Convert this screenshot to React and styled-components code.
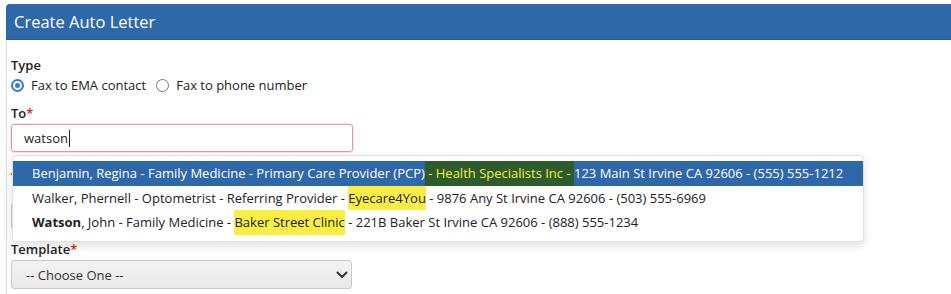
import React from "react";
import styled, { createGlobalStyle } from "styled-components";

const Global = createGlobalStyle`
  html, body { margin: 0; padding: 0; background: #fff; overflow: hidden; }
  body { font-family: "Open Sans", "Liberation Sans", sans-serif; color: #222; }
  * { box-sizing: border-box; }
`;

const Page = styled.div`
  position: relative;
  width: 951px;
  height: 294px;
  padding: 4px 0 0 6px;
`;

const Panel = styled.section`
  width: 960px;
  border: 1px solid #dcdcdc;
  border-radius: 4px 4px 0 0;
  height: 300px;
`;

const Header = styled.header`
  height: 36px;
  margin: -1px -1px 0 -1px;
  background: #2f68a8;
  border-radius: 4px 4px 0 0;
  color: #fff;
  font-size: 16.5px;
  display: flex;
  align-items: center;
  padding-left: 8px;
  border-bottom: 1px solid #285a93;
`;

const Body = styled.div`
  padding: 15px 4px 0 4px;
  display: flex;
  flex-direction: column;
  gap: 8px;
`;

const Group = styled.div`
  display: flex;
  flex-direction: column;
  gap: ${(p) => p.$gap ?? 1}px;
`;

const Label = styled.div`
  font-size: 13px;
  font-weight: 600;
  line-height: 20px;
  color: #222;
`;

const Req = styled.span`
  color: #d9261c;
`;

const RadioRow = styled.div`
  display: flex;
  align-items: center;
  height: 20px;
  gap: 10px;
`;

const RadioOpt = styled.label`
  display: flex;
  align-items: center;
  gap: 7px;
  font-size: 13px;
`;

const Radio = styled.span`
  width: 13px;
  height: 13px;
  border-radius: 50%;
  border: ${(p) => (p.$checked ? "2px solid #2f7ae5" : "1.5px solid #777")};
  display: flex;
  align-items: center;
  justify-content: center;
  &::after {
    content: "";
    width: 5px;
    height: 5px;
    border-radius: 50%;
    background: ${(p) => (p.$checked ? "#2f7ae5" : "transparent")};
  }
`;

const Input = styled.div`
  width: 342px;
  height: 28px;
  border: 1px solid #e59a9e;
  border-radius: 3px;
  box-shadow: 0 0 0 1px rgba(229, 154, 158, 0.25);
  display: flex;
  align-items: center;
  padding-left: 12px;
  font-size: 13px;
`;

const Caret = styled.span`
  display: inline-block;
  width: 1px;
  height: 17px;
  background: #222;
  margin-left: 1px;
`;

const HiddenInput = styled.div`
  width: 342px;
  height: 28px;
  border: 1px solid #ccc;
  border-radius: 3px;
  margin: 21px 0 1px;
`;

const Select = styled.div`
  width: 341px;
  height: 29px;
  border: 1px solid #c8c8c8;
  border-radius: 3px;
  background: linear-gradient(#f3f3f3, #e9e9e9);
  display: flex;
  align-items: center;
  justify-content: space-between;
  padding: 0 3px 0 14px;
  font-size: 13px;
  color: #333;
`;

const Dropdown = styled.ul`
  position: absolute;
  left: 12px;
  top: 155px;
  width: 852px;
  margin: 0;
  padding: 5px 0 6px;
  list-style: none;
  background: #fff;
  border: 1px solid #e2e2e2;
  border-radius: 4px;
  box-shadow: 0 4px 10px rgba(0, 0, 0, 0.12);
`;

const Item = styled.li`
  height: 24.5px;
  display: flex;
  align-items: center;
  padding-left: 19px;
  font-size: 13px;
  white-space: nowrap;
  color: ${(p) => (p.$active ? "#fff" : "#222")};
  background: ${(p) => (p.$active ? "#2f68a8" : "transparent")};
`;

const Mark = styled.span`
  height: 100%;
  display: flex;
  align-items: center;
  background: ${(p) => (p.$active ? "#2d5b2c" : "#fbee43")};
  color: ${(p) => (p.$active ? "#f4f03c" : "#222")};
  white-space: pre;
`;

const Strong = styled.b`
  font-weight: 700;
`;

const Chevron = () => (
  <svg width="12" height="8" viewBox="0 0 12 8">
    <path d="M1.5 1.5 L6 6 L10.5 1.5" fill="none" stroke="#333" strokeWidth="2" strokeLinecap="round" strokeLinejoin="round" />
  </svg>
);

export default function App() {
  return (
    <>
      <Global />
      <Page>
        <Panel>
          <Header>Create Auto Letter</Header>
          <Body>
            <Group $gap={0}>
              <Label>Type</Label>
              <RadioRow>
                <RadioOpt>
                  <Radio $checked />
                  Fax to EMA contact
                </RadioOpt>
                <RadioOpt>
                  <Radio />
                  Fax to phone number
                </RadioOpt>
              </RadioRow>
            </Group>
            <Group>
              <Label>
                To<Req>*</Req>
              </Label>
              <Input>
                watson<Caret />
              </Input>
            </Group>
            <Group>
              <Label>Attention</Label>
              <HiddenInput />
            </Group>
            <Group>
              <Label>
                Template<Req>*</Req>
              </Label>
              <Select>
                -- Choose One --
                <Chevron />
              </Select>
            </Group>
          </Body>
        </Panel>
        <Dropdown>
          <Item $active>
            Benjamin, Regina - Family Medicine - Primary Care Provider (PCP)
            <Mark $active> - Health Specialists Inc - </Mark>
            123 Main St Irvine CA 92606 - (555) 555-1212
          </Item>
          <Item>
            Walker, Phernell - Optometrist - Referring Provider -&nbsp;
            <Mark>Eyecare4You</Mark>
            &nbsp;- 9876 Any St Irvine CA 92606 - (503) 555-6969
          </Item>
          <Item>
            <Strong>Watson</Strong>, John - Family Medicine -&nbsp;
            <Mark>Baker Street Clinic</Mark>
            &nbsp;- 221B Baker St Irvine CA 92606 - (888) 555-1234
          </Item>
        </Dropdown>
      </Page>
    </>
  );
}
